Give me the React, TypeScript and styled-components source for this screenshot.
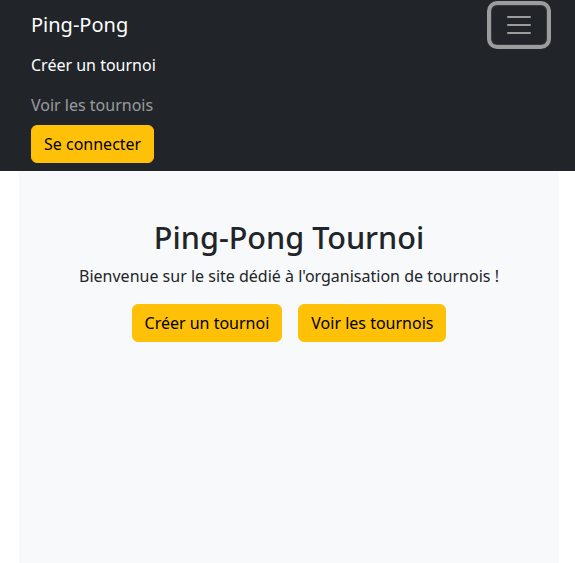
import React from "react";
import styled, { createGlobalStyle } from "styled-components";

const Global = createGlobalStyle`
  html, body { margin: 0; padding: 0; }
  body {
    font-family: "Noto Sans", "Open Sans", sans-serif;
    font-size: 16px;
    line-height: 1.5;
    color: #212529;
    background: #fff;
  }
  * { box-sizing: border-box; }
`;

const Page = styled.div`
  min-height: 100vh;
  display: flex;
  flex-direction: column;
`;

const Navbar = styled.nav`
  background: #212529;
  padding: 5px 0 8px;
`;

const NavContainer = styled.div`
  width: 540px;
  margin-left: 19px;
  padding: 0 12px;
`;

const TopRow = styled.div`
  display: flex;
  align-items: flex-start;
  justify-content: space-between;
`;

const Brand = styled.a`
  color: #fff;
  font-size: 20px;
  line-height: 30px;
  padding: 5px 0;
  text-decoration: none;
`;

const Toggler = styled.button`
  width: 56px;
  height: 40px;
  padding: 4px 12px;
  background: transparent;
  border: 1px solid rgba(255, 255, 255, 0.1);
  border-radius: 6px;
  box-shadow: 0 0 0 4px rgba(255, 255, 255, 0.55);
  display: flex;
  align-items: center;
  justify-content: center;
`;

const NavList = styled.div`
  display: flex;
  flex-direction: column;
  align-items: flex-start;
`;

const NavLink = styled.a<{ $active?: boolean }>`
  display: block;
  padding: 8px 0;
  line-height: 24px;
  font-size: 16px;
  text-decoration: none;
  color: ${(p) => (p.$active ? "#fff" : "rgba(255, 255, 255, 0.55)")};
`;

const Button = styled.button`
  font-family: inherit;
  font-size: 16px;
  line-height: 24px;
  padding: 6px 12px;
  border: 1px solid #ffc107;
  background: #ffc107;
  color: #000;
  border-radius: 6px;
  cursor: pointer;
`;

const Main = styled.main`
  flex: 1;
  width: 540px;
  margin-left: 19px;
  background: #f8f9fa;
  padding: 48px 12px;
  text-align: center;
`;

const Title = styled.h1`
  margin: 0 0 8px;
  font-size: 30.6px;
  font-weight: 500;
  line-height: 1.2;
`;

const Lead = styled.p`
  margin: 0 0 16px;
`;

const Actions = styled.div`
  display: flex;
  justify-content: center;
  gap: 16px;
`;

export default function App() {
  return (
    <Page>
      <Global />
      <Navbar>
        <NavContainer>
          <TopRow>
            <Brand href="#">Ping-Pong</Brand>
            <Toggler aria-label="menu">
              <svg width="30" height="30" viewBox="0 0 30 30">
                <path
                  stroke="rgba(255,255,255,0.55)"
                  strokeLinecap="round"
                  strokeMiterlimit="10"
                  strokeWidth="2"
                  d="M4 7h22M4 15h22M4 23h22"
                />
              </svg>
            </Toggler>
          </TopRow>
          <NavList>
            <NavLink href="#" $active>Créer un tournoi</NavLink>
            <NavLink href="#">Voir les tournois</NavLink>
            <Button>Se connecter</Button>
          </NavList>
        </NavContainer>
      </Navbar>
      <Main>
        <Title>Ping-Pong Tournoi</Title>
        <Lead>Bienvenue sur le site dédié à l'organisation de tournois !</Lead>
        <Actions>
          <Button>Créer un tournoi</Button>
          <Button>Voir les tournois</Button>
        </Actions>
      </Main>
    </Page>
  );
}
